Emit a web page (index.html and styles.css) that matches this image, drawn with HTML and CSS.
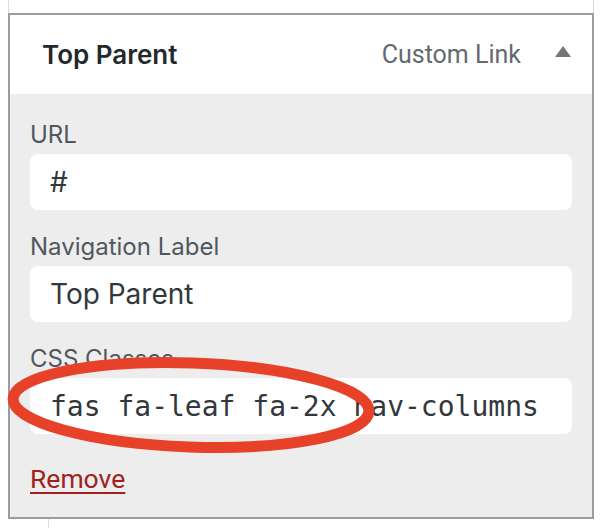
FILE: index.html
```html
<!DOCTYPE html>
<html lang="en">
<head>
    <meta charset="UTF-8">
    <meta name="viewport" content="width=device-width, initial-scale=1.0">
    <title>Menu Item</title>
    <link rel="stylesheet" href="styles.css">
</head>
<body>
    <div class="page">
        <div class="prev-item"></div>

        <div class="menu-item">
            <div class="item-bar">
                <span class="item-title">Top Parent</span>
                <span class="item-type">Custom Link</span>
                <svg class="item-toggle" width="16" height="11" viewBox="0 0 16 11">
                    <polygon points="8,0 16,11 0,11" fill="#72777c"/>
                </svg>
            </div>

            <div class="item-settings">
                <div class="field">
                    <label for="url">URL</label>
                    <input type="text" id="url" value="#">
                </div>
                <div class="field">
                    <label for="nav-label">Navigation Label</label>
                    <input type="text" id="nav-label" value="Top Parent">
                </div>
                <div class="field">
                    <label for="css-classes">CSS Classes</label>
                    <input type="text" id="css-classes" class="mono" value="fas fa-leaf fa-2x nav-columns">
                </div>
                <a href="#" class="remove-link">Remove</a>
            </div>
        </div>

        <div class="next-item"></div>

        <!-- annotation drawn on top of the screenshot -->
        <svg class="annotation" width="400" height="120" viewBox="0 0 400 120">
            <ellipse cx="191" cy="55" rx="178" ry="42" fill="none" stroke="#e8412a" stroke-width="11" transform="rotate(2 191 55)"/>
        </svg>
    </div>
</body>
</html>
```

FILE: styles.css
```css
body {
    margin: 0;
    background-color: #fff;
    font-family: Inter, "Noto Sans", sans-serif;
    color: #32373c;
}

.page {
    position: relative;
    height: 528px;
    overflow: hidden;
}

.prev-item {
    height: 13px;
    width: 586px;
    margin-left: 8px;
    box-sizing: border-box;
    border-left: 1px solid #dcdcdc;
    border-right: 1px solid #dcdcdc;
}

.menu-item {
    width: 586px;
    margin-left: 8px;
    box-sizing: border-box;
    border: 2px solid #9c9c9c;
    background-color: #ededed;
}

.item-bar {
    display: flex;
    align-items: center;
    height: 79px;
    padding: 0 21px 0 32px;
    background-color: #fff;
}

.item-title {
    flex: 1;
    font-size: 26px;
    font-weight: 600;
    line-height: 79px;
    color: #23282d;
}

.item-type {
    font-family: Roboto, "Liberation Sans", sans-serif;
    font-size: 25px;
    line-height: 79px;
    color: #646970;
    margin-right: 34px;
}

.item-toggle {
    margin-bottom: 6px;
}

.item-settings {
    padding: 26px 20px 23px;
}

.field {
    display: flex;
    flex-direction: column;
    gap: 4px;
    margin-bottom: 22px;
}

.field label {
    font-size: 24px;
    line-height: 30px;
    color: #50575e;
}

.field input {
    height: 56px;
    box-sizing: border-box;
    padding: 0 20px;
    border: none;
    border-radius: 8px;
    background-color: #fff;
    font-family: Inter, "Noto Sans", sans-serif;
    font-size: 28px;
    color: #32373c;
    outline: none;
}

.field input.mono {
    font-family: "DejaVu Sans Mono", "Liberation Mono", monospace;
}

.remove-link {
    display: inline-block;
    margin-top: 8px;
    font-family: Roboto, "Liberation Sans", sans-serif;
    font-size: 26.5px;
    line-height: 30px;
    color: #a0221b;
    text-decoration: underline;
    text-underline-offset: 4px;
}

.next-item {
    height: 20px;
    margin-left: 48px;
    border-left: 1px solid #dcdcdc;
}

.annotation {
    position: absolute;
    left: 0;
    top: 350px;
}
```
